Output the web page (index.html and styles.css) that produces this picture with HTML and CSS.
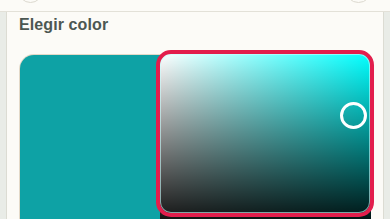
FILE: index.html
```html
<!DOCTYPE html>
<html lang="es">
<head>
  <meta charset="UTF-8" />
  <meta name="viewport" content="width=device-width, initial-scale=1" />
  <title>Elegir color</title>
  <link rel="stylesheet" href="styles.css">
</head>
<body>
  <header class="topbar">
    <span class="round-btn"></span>
    <span class="round-btn round-btn-right"></span>
  </header>

  <div class="page">
    <main class="card">
      <h2>Elegir color</h2>
      <div class="color-row">
        <div class="swatch"></div>
        <div class="picker">
          <div class="picker-handle"></div>
          <div class="highlight"></div>
        </div>
      </div>
    </main>
  </div>
</body>
</html>
```

FILE: styles.css
```css
*, *::before, *::after {
  box-sizing: border-box;
}

body {
  margin: 0;
  background: #fcfbf7;
  font-family: 'Liberation Sans', Arial, sans-serif;
  color: #4c5752;
  height: 219px;
  overflow: hidden;
}

/* top bar, mostly scrolled out of view */
.topbar {
  display: flex;
  justify-content: space-between;
  height: 12px;
  padding: 0 18px 0 18px;
  border-bottom: 1px solid #e3e1d8;
  overflow: hidden;
}

.round-btn {
  width: 25px;
  height: 25px;
  margin-top: -22px;
  border-radius: 50%;
  border: 1px solid #dcd9cf;
  background: #fcfbf7;
}

.round-btn-right {
  width: 27px;
  height: 27px;
  margin-top: -24px;
}

.page {
  background: #e9ece7;
  padding: 0 6px;
  height: 207px;
}

.card {
  height: 100%;
  background: #fcfbf7;
  border-left: 1px solid #dcdcd3;
  border-right: 1px solid #dcdcd3;
  padding: 3px 0 0 12px;
  overflow: hidden;
}

.card h2 {
  margin: 0;
  font-size: 16px;
  line-height: 20px;
  font-weight: 700;
  letter-spacing: 0.1px;
}

.color-row {
  display: flex;
  margin-top: 20px;
  padding-left: 1px;
}

.swatch {
  width: 140px;
  height: 180px;
  background: #0ea2a5;
  border-radius: 14px 0 0 0;
  box-shadow: 0 0 0 1px #e3d9c8;
}

.picker {
  position: relative;
  width: 211px;
  height: 180px;
  margin-top: -1px;
  border-radius: 10px 10px 0 0;
  background:
    linear-gradient(to bottom, rgba(0, 0, 0, 0), #000),
    linear-gradient(to right, #fff, #00ffff);
}

.picker-handle {
  position: absolute;
  left: 180px;
  top: 48px;
  width: 27px;
  height: 27px;
  border: 3px solid #fff;
  border-radius: 50%;
}

/* tutorial highlight ring over the picker */
.highlight {
  position: absolute;
  top: -4px;
  left: -4px;
  right: -3px;
  height: 167px;
  border: 4px solid #e21e4c;
  border-radius: 15px;
  box-shadow: inset 0 0 0 1px rgba(200, 255, 255, 0.6);
}
```
